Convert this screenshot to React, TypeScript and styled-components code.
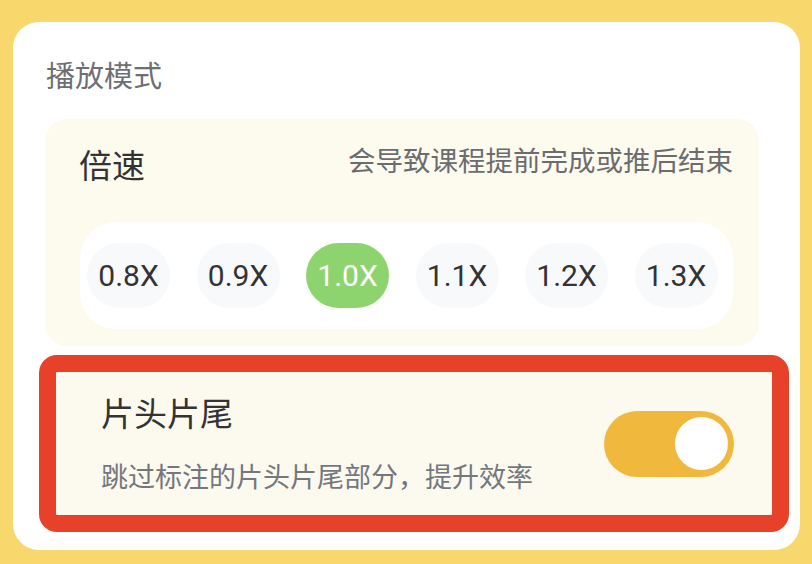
import React, { useState } from 'react';
import styled, { createGlobalStyle } from 'styled-components';

const GlobalStyle = createGlobalStyle`
  html, body {
    margin: 0;
    padding: 0;
    background: #f8d86c;
  }
  body {
    font-family: Roboto, "Noto Sans CJK SC", sans-serif;
    width: 812px;
    height: 564px;
    overflow: hidden;
  }
`;

const speeds = ['0.8X', '0.9X', '1.0X', '1.1X', '1.2X', '1.3X'];

export default function App() {
    const [speed, setSpeed] = useState('1.0X');
    const [skip, setSkip] = useState(true);

    return (
        <>
            <GlobalStyle />
            <Page>
                <Card>
                    <SectionTitle>播放模式</SectionTitle>

                    <SpeedPanel>
                        <SpeedHeader>
                            <RowTitle>倍速</RowTitle>
                            <Hint>会导致课程提前完成或推后结束</Hint>
                        </SpeedHeader>
                        <PillRow>
                            {speeds.map((s) => (
                                <Pill key={s} $active={s === speed} onClick={() => setSpeed(s)}>
                                    {s}
                                </Pill>
                            ))}
                        </PillRow>
                    </SpeedPanel>

                    <Highlight>
                        <SkipRow>
                            <SkipText>
                                <RowTitle>片头片尾</RowTitle>
                                <SubText>跳过标注的片头片尾部分，提升效率</SubText>
                            </SkipText>
                            <Toggle $on={skip} onClick={() => setSkip(!skip)}>
                                <Knob />
                            </Toggle>
                        </SkipRow>
                    </Highlight>
                </Card>
            </Page>
        </>
    );
}

// layout
const Page = styled.div`
  padding: 22px 12px 0 13px;
`;

const Card = styled.div`
  height: 528px;
  box-sizing: border-box;
  background: #ffffff;
  border-radius: 26px;
  padding-top: 36px;
`;

const SectionTitle = styled.div`
  margin-left: 33px;
  font-size: 29px;
  line-height: 38px;
  color: #6e6f72;
`;

const SpeedPanel = styled.div`
  margin: 23px 0 0 32px;
  width: 714px;
  height: 227px;
  box-sizing: border-box;
  background: #fdfaee;
  border-radius: 22px;
  padding: 26px 26px 0 34px;
`;

const SpeedHeader = styled.div`
  display: flex;
  justify-content: space-between;
  align-items: center;
`;

const RowTitle = styled.div`
  font-size: 33px;
  line-height: 40px;
  color: #333333;
`;

const Hint = styled.div`
  font-size: 27.5px;
  line-height: 34px;
  color: #6b6c70;
  margin-bottom: 10px;
`;

const PillRow = styled.div`
  margin-top: 33px;
  margin-left: 1px;
  width: 653px;
  height: 107px;
  box-sizing: border-box;
  background: #ffffff;
  border-radius: 36px;
  display: flex;
  align-items: center;
  gap: 26.5px;
  padding: 0 7px;
`;

const Pill = styled.div<{ $active: boolean }>`
  width: 83px;
  height: 65px;
  border-radius: 33px;
  display: flex;
  align-items: center;
  justify-content: center;
  font-size: 30px;
  cursor: pointer;
  background: ${(p) => (p.$active ? '#8ed46e' : '#f8f9fb')};
  color: ${(p) => (p.$active ? '#ffffff' : '#333333')};
`;

const Highlight = styled.div`
  margin: 9px 0 0 26px;
  width: 750px;
  height: 177px;
  box-sizing: border-box;
  border: 17px solid #e8412a;
  border-radius: 18px;
  background: #fcf9ee;
`;

const SkipRow = styled.div`
  height: 100%;
  display: flex;
  align-items: center;
  justify-content: space-between;
  padding: 0 38px 0 45px;
`;

const SkipText = styled.div`
  display: flex;
  flex-direction: column;
  gap: 26px;
  padding-top: 2px;
`;

const SubText = styled.div`
  font-size: 27px;
  line-height: 34px;
  color: #74777e;
`;

const Toggle = styled.div<{ $on: boolean }>`
  width: 130px;
  height: 66px;
  border-radius: 33px;
  background: ${(p) => (p.$on ? '#f0b93e' : '#dddddd')};
  display: flex;
  align-items: center;
  justify-content: ${(p) => (p.$on ? 'flex-end' : 'flex-start')};
  padding: 0 6px;
  box-sizing: border-box;
  cursor: pointer;
`;

const Knob = styled.div`
  width: 53px;
  height: 53px;
  border-radius: 50%;
  background: #ffffff;
`;
